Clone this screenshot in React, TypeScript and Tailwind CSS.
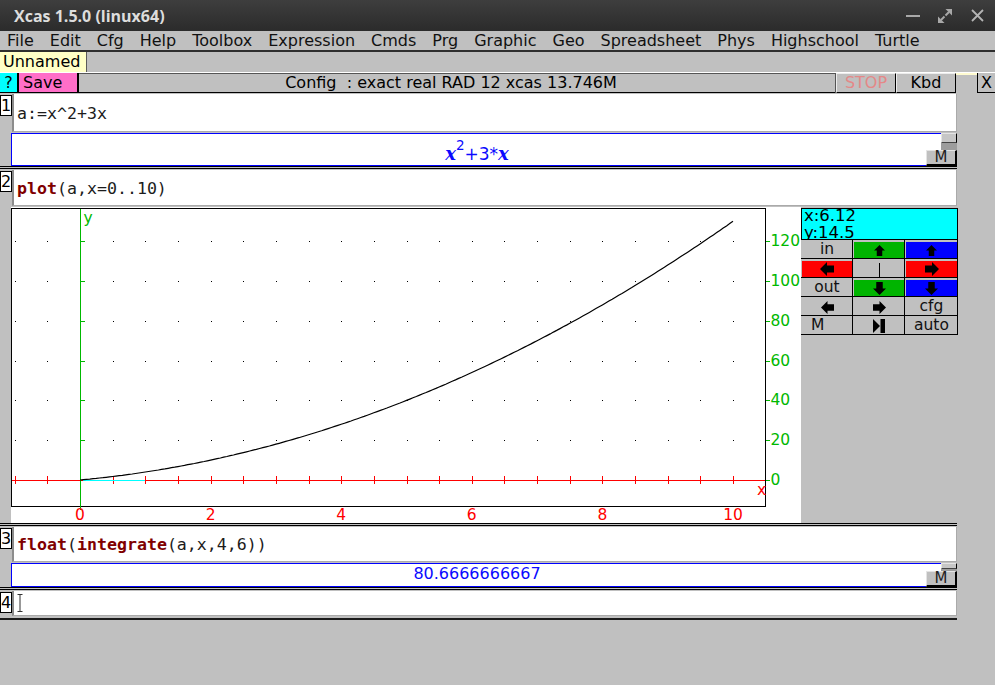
import React from 'react'

type Dir = 'up' | 'down' | 'left' | 'right'

const MENUS = [
  'File',
  'Edit',
  'Cfg',
  'Help',
  'Toolbox',
  'Expression',
  'Cmds',
  'Prg',
  'Graphic',
  'Geo',
  'Spreadsheet',
  'Phys',
  'Highschool',
  'Turtle',
]

const Arrow = ({ dir, size }: { dir: Dir; size: number }) => {
  const rot = { right: 0, down: 90, left: 180, up: 270 }[dir]
  return (
    <svg width={size} height={size} viewBox="0 0 14 14" className="block">
      <path
        d="M0 3.5h7V0l7 7-7 7v-3.5H0z"
        fill="#000"
        transform={`rotate(${rot} 7 7)`}
      />
    </svg>
  )
}

const TitleBar = () => (
  <div className="h-[31px] shrink-0 bg-linear-to-b from-[#3e3e3e] to-[#2b2b2b] flex items-center pl-[14px] pr-[11px]">
    <span className="font-['Open_Sans',sans-serif] font-bold text-[16px] text-[#dddddd]">
      Xcas 1.5.0 (linux64)
    </span>
    <div className="ml-auto flex items-center gap-[18px]">
      <svg width="14" height="4" viewBox="0 0 14 4" className="block mt-[1px]">
        <rect y="1" width="14" height="2" fill="#a8a8a8" />
      </svg>
      <svg width="14" height="14" viewBox="0 0 14 14" className="block">
        <path d="M7.5 0H14v6.5z" fill="#a8a8a8" />
        <path d="M11 3L7.5 6.5" stroke="#a8a8a8" strokeWidth="2" />
        <path d="M0 7.5V14h6.5z" fill="#a8a8a8" />
        <path d="M3 11l3.5-3.5" stroke="#a8a8a8" strokeWidth="2" />
      </svg>
      <svg width="13" height="13" viewBox="0 0 13 13" className="block ml-[1px]">
        <path d="M1 1l11 11M12 1L1 12" stroke="#b4b4b4" strokeWidth="1.8" />
      </svg>
    </div>
  </div>
)

const MenuBar = () => (
  <div className="h-[21px] shrink-0 border-b-2 border-[#2e2e2e] flex items-center gap-[16px] pl-[7px] text-[16px] leading-none text-[#111]">
    {MENUS.map(m => (
      <span key={m}>{m}</span>
    ))}
  </div>
)

const TabRow = () => (
  <div className="h-[21px] shrink-0 flex border-b border-white">
    <div className="w-[87px] bg-[#ffffc6] border-r border-[#5a5a5a] pl-[3px] flex items-center text-[16px] leading-none">
      Unnamed
    </div>
  </div>
)

const raised =
  'border-t border-l border-[#ececec] border-r border-b border-r-black border-b-black'

const Toolbar = () => (
  <div className="h-[20px] shrink-0 flex text-[16px] leading-none">
    <div className="w-[17px] bg-[#00ffff] border-b border-black flex items-center justify-center">
      ?
    </div>
    <div className="w-[2px] bg-black" />
    <div className="w-[58px] bg-[#ff6ec8] border-b border-black flex items-center pl-[4px]">
      Save
    </div>
    <div className="w-[2px] bg-black" />
    <div className="w-[756px] border-t border-t-[#555] border-b border-b-black flex items-center justify-center pr-[12px] whitespace-pre">
      Config  : exact real RAD 12 xcas 13.746M
    </div>
    <div className="w-[1px] bg-[#555]" />
    <div className={`w-[60px] ${raised} flex items-center justify-center text-[#e48888]`}>
      STOP
    </div>
    <div className={`w-[60px] ${raised} flex items-center justify-center`}>
      Kbd
    </div>
    <div className="w-[21px] border-t-2 border-[#fffbd0]" />
    <div className="w-[18px] border-l border-black border-b flex items-center justify-center">
      X
    </div>
  </div>
)

const Label = ({ n }: { n: string }) => (
  <div className="w-[11px] shrink-0">
    <div className="w-[12px] h-[21px] mt-[1px] bg-white border border-black flex items-center justify-center text-[16px] leading-none">
      {n}
    </div>
  </div>
)

const Input = ({ h, children }: { h: string; children?: React.ReactNode }) => (
  <div
    className={`${h} ml-[1px] bg-white border-l-2 border-l-[#8c8c8c] border-r border-b border-[#aaaaaa] flex items-center pl-[3px] pt-[3px] font-['DejaVu_Sans_Mono',monospace] text-[16.6px] text-[#1c1c1c] whitespace-pre`}
  >
    {children}
  </div>
)

const Kw = ({ children }: { children: React.ReactNode }) => (
  <span className="font-bold text-[#7f0000]">{children}</span>
)

const MButton = () => (
  <div className="absolute right-0 bottom-[-1px] w-[31px] h-[16px] bg-[#c0c0c0] border-t border-l border-[#e4e4e4] border-r-2 border-b-2 border-r-black border-b-black flex items-center justify-center text-[15px] leading-none text-[#222]">
    M
  </div>
)

const Output = ({
  h,
  small,
  children,
}: {
  h: string
  small: string
  children: React.ReactNode
}) => (
  <div
    className={`${h} relative bg-white border-l border-t border-b border-[#0000ff] flex items-center justify-center pr-[15px]`}
  >
    {children}
    <div className="absolute right-0 top-[-1px] w-[16px] flex flex-col">
      <div
        className={`${small} bg-[#c6c6c6] border-t border-l border-[#e4e4e4] border-r border-b border-r-black border-b-[#444]`}
      />
      <div className="h-[7px] bg-[#9c9c9c]" />
    </div>
    <MButton />
  </div>
)

const Sep = () => <div className="h-[3px] w-[957px] border-y border-black mb-[1px]" />

const Plot = () => {
  const px = (x: number) => 69 + 65.3 * x
  const py = (y: number) => 273 - 1.99 * y
  const xs = Array.from({ length: 23 }, (_, i) => -1 + i * 0.5)
  const ys = [20, 40, 60, 80, 100, 120]
  const curve = Array.from({ length: 201 }, (_, i) => {
    const x = i * 0.05
    return `${px(x).toFixed(1)},${py(x * x + 3 * x).toFixed(1)}`
  }).join(' ')
  const green = '#00b800'
  const red = '#ff0000'
  return (
    <svg width="790" height="316" className="block" fontSize="15.5">
      <rect x="0.5" y="1.5" width="754" height="298" fill="white" stroke="black" />
      {xs
        .filter(x => x !== 0)
        .map(x =>
          ys.map(y => (
            <rect
              key={`${x}-${y}`}
              x={Math.round(px(x))}
              y={Math.round(py(y))}
              width="1"
              height="1"
              fill="#000"
            />
          ))
        )}
      <line x1="1" y1="273.5" x2="754" y2="273.5" stroke={red} />
      {xs.map(x => (
        <line
          key={x}
          x1={Math.round(px(x)) + 0.5}
          y1="269"
          x2={Math.round(px(x)) + 0.5}
          y2="277"
          stroke={red}
        />
      ))}
      <line x1="72" y1="273.5" x2="134" y2="273.5" stroke="#00ffff" />
      <line x1="69.5" y1="2" x2="69.5" y2="303" stroke={green} />
      {ys.map(y => (
        <line
          key={y}
          x1="69.5"
          y1={Math.round(py(y)) + 0.5}
          x2="74"
          y2={Math.round(py(y)) + 0.5}
          stroke={green}
        />
      ))}
      <polyline points={curve} fill="none" stroke="#000" strokeWidth="1.2" />
      {[0, ...ys].map(y => (
        <g key={y}>
          <line
            x1="755"
            y1={Math.round(py(y)) + 0.5}
            x2="759"
            y2={Math.round(py(y)) + 0.5}
            stroke={green}
          />
          <text x="759.5" y={py(y)} fill={green} dominantBaseline="central">
            {y}
          </text>
        </g>
      ))}
      {[0, 2, 4, 6, 8, 10].map(x => (
        <text
          key={x}
          x={px(x)}
          y="308"
          fill={red}
          textAnchor="middle"
          dominantBaseline="central"
        >
          {x}
        </text>
      ))}
      <text x="750.5" y="283" fill={red} textAnchor="middle" dominantBaseline="central">
        x
      </text>
      <text x="72.5" y="11" fill={green} dominantBaseline="central">
        y
      </text>
    </svg>
  )
}

type CellDef = {
  bg: string
  content?: React.ReactNode
  align?: string
}

const CELLS: CellDef[] = [
  { bg: 'bg-[#c0c0c0]', content: 'in' },
  { bg: 'bg-[#00b400]', content: <Arrow dir="up" size={11} /> },
  { bg: 'bg-[#0000ff]', content: <Arrow dir="up" size={11} /> },
  { bg: 'bg-[#ff0000]', content: <Arrow dir="left" size={14} /> },
  { bg: 'bg-[#c0c0c0]', content: <div className="w-[1px] h-[14px] bg-black mt-[2px]" /> },
  { bg: 'bg-[#ff0000]', content: <Arrow dir="right" size={14} /> },
  { bg: 'bg-[#c0c0c0]', content: 'out' },
  { bg: 'bg-[#00b400]', content: <Arrow dir="down" size={13} /> },
  { bg: 'bg-[#0000ff]', content: <Arrow dir="down" size={13} /> },
  { bg: 'bg-[#c0c0c0]', content: <Arrow dir="left" size={13} /> },
  { bg: 'bg-[#c0c0c0]', content: <Arrow dir="right" size={13} /> },
  { bg: 'bg-[#c0c0c0]', content: 'cfg' },
  { bg: 'bg-[#c0c0c0]', content: 'M', align: 'justify-start pl-[9px]' },
  {
    bg: 'bg-[#c0c0c0]',
    content: (
      <svg width="12" height="14" viewBox="0 0 12 14" className="block">
        <path d="M0 0l7 7-7 7z" fill="#000" />
        <rect x="7.5" y="0" width="4.5" height="14" fill="#000" />
      </svg>
    ),
  },
  { bg: 'bg-[#c0c0c0]', content: 'auto' },
]

const GraphPanel = () => (
  <div className="w-[156px] pt-[1px]">
    <div className="h-[32px] w-[157px] bg-[#00ffff] border border-black overflow-hidden pl-[2px] text-[16.5px] leading-[16.5px]">
      <div className="-mt-[1px]">x:6.12</div>
      <div>y:14.5</div>
    </div>
    <div className="grid grid-cols-[52px_52px_53px] w-[157px]">
      {CELLS.map((c, i) => (
        <div
          key={i}
          className="h-[19px] border-r border-b border-black bg-[#c0c0c0] pt-[2px] pl-[1px]"
        >
          <div
            className={`h-full flex items-center ${c.align ?? 'justify-center'} ${c.bg} text-[15.5px] leading-none text-[#111]`}
          >
            {c.content}
          </div>
        </div>
      ))}
    </div>
  </div>
)

const Worksheet = () => (
  <div className="flex flex-col w-[957px] pt-[1px]">
    <div className="flex">
      <Label n="1" />
      <div className="w-[946px] flex flex-col gap-[1px]">
        <Input h="h-[38px]">a:=x^2+3x</Input>
        <Output h="h-[33px]" small="h-[10px]">
          <span className="text-[#0a0aff] flex items-baseline pt-[9px] leading-none">
            <span className="font-['DejaVu_Serif',serif] font-bold italic text-[18px]">x</span>
            <sup className="text-[13.5px] -top-[10px]">2</sup>
            <span className="text-[17px]">+3*</span>
            <span className="font-['DejaVu_Serif',serif] font-bold italic text-[18px]">x</span>
          </span>
        </Output>
      </div>
    </div>
    <Sep />
    <div className="flex">
      <Label n="2" />
      <div className="w-[946px] flex flex-col gap-[1px]">
        <Input h="h-[36px]">
          <Kw>plot</Kw>(a,x=0..10)
        </Input>
        <div className="flex h-[316px]">
          <div className="w-[790px] bg-white">
            <Plot />
          </div>
          <GraphPanel />
        </div>
      </div>
    </div>
    <Sep />
    <div className="flex">
      <Label n="3" />
      <div className="w-[946px] flex flex-col gap-[1px]">
        <Input h="h-[35px]">
          <Kw>float</Kw>(<Kw>integrate</Kw>(a,x,4,6))
        </Input>
        <Output h="h-[24px]" small="h-[6px]">
          <span className="text-[#0a0aff] text-[16px] leading-none -mt-[2px]">
            80.6666666667
          </span>
        </Output>
      </div>
    </div>
    <Sep />
    <div className="flex">
      <Label n="4" />
      <div className="w-[946px] flex flex-col">
        <Input h="h-[25px]">
          <svg width="6" height="18" viewBox="0 0 6 18" className="block -mt-[3px]">
            <path d="M0.5 0.5h5M3 0.5v17M0.5 17.5h5" stroke="#333" strokeWidth="1" fill="none" />
          </svg>
        </Input>
      </div>
    </div>
    <div className="h-[2px] mt-[2px] bg-[#1a1a1a]" />
  </div>
)

export default function App() {
  return (
    <div className="w-[995px] h-[685px] overflow-hidden bg-[#c0c0c0] font-['DejaVu_Sans',sans-serif] text-[16px] text-black flex flex-col">
      <TitleBar />
      <MenuBar />
      <TabRow />
      <Toolbar />
      <Worksheet />
    </div>
  )
}
